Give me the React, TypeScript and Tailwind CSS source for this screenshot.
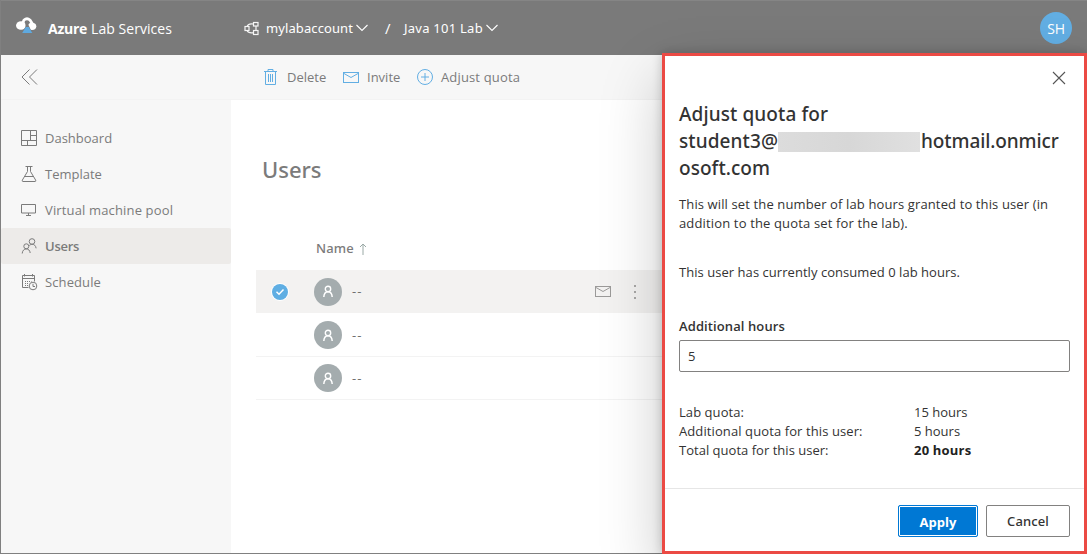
import type { ReactNode } from 'react';

function Icon({ w, h, className = '', children }: { w: number; h: number; className?: string; children: ReactNode }) {
  return (
    <svg width={w} height={h} viewBox={`0 0 ${w} ${h}`} fill="none" stroke="currentColor" className={`shrink-0 ${className}`}>
      {children}
    </svg>
  );
}

function Logo() {
  return (
    <Icon w={21} h={17} className="text-white">
      <path d="M6.500 6.500 8 3Q11 .6 14 3l2.500 4" strokeWidth="2.800" strokeLinejoin="round" />
      <ellipse cx="5" cy="8.500" rx="5" ry="4.300" fill="currentColor" stroke="none" />
      <ellipse cx="16" cy="9.300" rx="4.300" ry="3.600" fill="currentColor" stroke="none" />
      <path d="M9.500 4.500h3v3.500l4 8.500H6l3.500-7z" fill="#7a7a7a" stroke="none" />
      <path d="M9.700 10h3.100l3.500 6H6.200z" fill="#5fa9df" stroke="none" />
    </Icon>
  );
}

function Hierarchy() {
  return (
    <Icon w={16} h={15} className="text-[#f5f5f5]">
      <g strokeWidth="1.2">
        <rect x="1" y="5.5" width="4" height="4" />
        <rect x="9.5" y="1.5" width="4.5" height="3.5" />
        <rect x="9.5" y="9.5" width="4.5" height="4" />
        <path d="M3 5.5C4 3 6 2.3 9.5 3M3 9.5c1 2.2 3 2.8 6.500 2.200M12 5v4.500" />
      </g>
    </Icon>
  );
}

function Chevron() {
  return <Icon w={12} h={8} className="text-white"><path d="M.5 1 6 6.500 11.500 1" strokeWidth="1.100" /></Icon>;
}

function Envelope({ className }: { className: string }) {
  return (
    <Icon w={16} h={11} className={className}>
      <rect x=".5" y=".5" width="15" height="10" />
      <path d="M1 1.500 8 5.500l7-4" />
    </Icon>
  );
}

const nav = [
  {
    label: 'Dashboard', cls: '',
    icon: <Icon w={16} h={16}><path d="M.5.5h15v15H.5zM.5 10.500h15M9.500.5v10M9.500 5.500h6M6.500 10.500v5" /></Icon>,
  },
  {
    label: 'Template', cls: '',
    icon: <Icon w={16} h={16}><path d="M4.500.5h7M6.500.5v5L1.300 14.200q-.4 1.300.7 1.300h12q1.100 0 .7-1.300L9.500 5.500v-5M3.500 10.500h9" /></Icon>,
  },
  {
    label: 'Virtual machine pool', cls: 'tracking-[0.15px]',
    icon: <Icon w={16} h={12}><path d="M.5.5h14v8.500H.5zM7.500 9v2.500M5 11.500h5" /></Icon>,
  },
  {
    label: 'Users', cls: 'font-semibold tracking-[-0.25px]',
    icon: (
      <Icon w={16} h={16}>
        <circle cx="11" cy="3.500" r="2.800" /><circle cx="5.300" cy="8.300" r="2.500" />
        <path d="M1.200 15.500c.2-3 2-4.600 4.100-4.600s3.600 1.500 3.900 4.100M8.300 7.500c1-.9 2-1.200 2.900-1.200 2 0 3.600 1.400 3.900 4" />
      </Icon>
    ),
  },
  {
    label: 'Schedule', cls: 'tracking-[0.1px]',
    icon: (
      <Icon w={17} h={17}>
        <path d="M7.500 13.500h-6v-12h12v6M1.500 4.500h12M3.500 0v2.500M11.500 0v2.500" />
        <path d="M4 7.500h6.500M4 9.500h4M4 11.500h3" strokeDasharray="1 1" />
        <circle cx="12" cy="12" r="3.800" /><path d="M12 9.800v2.700h2" />
      </Icon>
    ),
  },
];

function Person() {
  return (
    <span className="flex size-7 items-center justify-center rounded-full bg-[#a4acae] text-white">
      <Icon w={12} h={13}><circle cx="6" cy="4" r="2.700" strokeWidth="1.400" /><path d="M1.800 12C2 8.500 3.700 6.700 6 6.700s4 1.800 4.200 5.300" strokeWidth="1.500" /></Icon>
    </span>
  );
}

function Row({ selected = false }: { selected?: boolean }) {
  return (
    <div className={`flex items-center ${selected ? 'mb-px h-[43px] bg-[#f3f2f1]' : 'h-[43px] border-b border-[#f3f3f3]'}`}>
      <div className="flex w-[58px] shrink-0 pl-4">
        {selected && (
          <span className="flex size-4 items-center justify-center rounded-full bg-[#5faee3] text-white ring-1 ring-white">
            <Icon w={10} h={8}><path d="M1.500 3.800 4 6.200 8.500 1.500" strokeWidth="1.500" /></Icon>
          </span>
        )}
      </div>
      <Person />
      <span className="ml-[10px] w-[243px] pt-px text-[#707070] tracking-[1px]">--</span>
      {selected && (
        <>
          <Envelope className="text-[#9b9a99]" />
          <Icon w={2} h={14} className="ml-[23px] text-[#a8a7a6]"><path d="M1 0v2M1 6v2M1 12v2" strokeWidth="2" /></Icon>
        </>
      )}
    </div>
  );
}

const quotas = [
  { label: 'Lab quota:', value: '15 hours', lc: 'tracking-[0.06px]', vc: '' },
  { label: 'Additional quota for this user:', value: '5 hours', lc: 'tracking-[0.1px]', vc: '' },
  { label: 'Total quota for this user:', value: '20 hours', lc: 'tracking-[0.02px]', vc: 'font-bold tracking-[0.2px] text-[#222]' },
];

function Panel() {
  return (
    <section className="absolute top-[53px] right-0 bottom-0 flex w-[425px] flex-col border-3 border-[#eb4a44] bg-white text-[#333] shadow-[0_0_10px_rgba(0,0,0,0.2),0_26px_58px_rgba(0,0,0,0.22)]">
      <div className="flex h-[43px] items-center justify-end pr-[18px]">
        <Icon w={14} h={14} className="text-[#555]"><path d="M1 1l12 12M13 1 1 13" strokeWidth="1.100" /></Icon>
      </div>
      <div className="flex grow flex-col px-[14px]">
        <h2 className="mt-[2px] font-['Noto_Sans',sans-serif] text-[19px] leading-[27px] font-medium">
          <div className="tracking-[0.1px]">Adjust quota for</div>
          <div className="flex items-center">
            <span className="w-[99px] tracking-[0.1px]">student3@</span>
            <span className="mt-px mr-px h-5 w-[142px] bg-linear-to-r from-[#dcdcdc] via-[#d7d7d7] to-[#e0e0e0]" />
            <span className="tracking-[-0.1px]">hotmail.onmicr</span>
          </div>
          <div className="tracking-[0.05px]">osoft.com</div>
        </h2>
        <p className="mt-[13px] leading-[19px] whitespace-nowrap">
          <span className="block tracking-[0.125px]">This will set the number of lab hours granted to this user (in</span>
          <span className="block tracking-[0.15px]">addition to the quota set for the lab).</span>
        </p>
        <p className="mt-[30px] leading-[19px] tracking-[0.045px]">This user has currently consumed 0 lab hours.</p>
        <label className="mt-[35px] leading-[19px] font-semibold tracking-[0.1px]">Additional hours</label>
        <div className="mt-[4px] flex h-8 w-[391px] items-center rounded-[2px] border border-[#828180] pt-[2px] pl-2">5</div>
        <div className="mt-[31px] leading-[19px]">
          {quotas.map((q) => (
            <div key={q.label} className="flex">
              <span className={`w-[235px] ${q.lc}`}>{q.label}</span>
              <span className={q.vc}>{q.value}</span>
            </div>
          ))}
        </div>
      </div>
      <footer className="flex h-[63px] items-start justify-end gap-2 border-t border-[#e6e6e6] pt-4 pr-[14px]">
        <button className="h-8 w-20 rounded-[2px] border border-[#0078d4] bg-[#0078d4] p-0 font-bold text-white inset-ring inset-ring-white">
          <span className="block pt-[3px]">Apply</span>
        </button>
        <button className="h-8 w-[84px] rounded-[2px] border border-[#828180] font-['Noto_Sans',sans-serif] font-medium tracking-[0.1px]">
          <span className="block pt-px">Cancel</span>
        </button>
      </footer>
    </section>
  );
}

export default function App() {
  return (
    <div className="relative h-[554px] w-[1087px] overflow-hidden">
      <div className="flex h-full flex-col border-b border-l border-[#808080] bg-white font-['Open_Sans',sans-serif] text-[13px] text-[#7b7b7b]">
        <header className="flex h-[55px] shrink-0 items-center border-t border-[#858585] bg-[#7a7a7a] text-white">
          <div className="mb-[5px] ml-[15px]"><Logo /></div>
          <div className="ml-[11px] flex w-[196px] gap-1 text-[14px]">
            <span className="font-bold tracking-[-0.25px]">Azure</span>
            <span className="tracking-[0.04px]">Lab Services</span>
          </div>
          <div className="flex w-[140px] items-center">
            <Hierarchy />
            <span className="ml-[6px] pt-[2px] font-['Noto_Sans',sans-serif] tracking-[0.1px]">mylabaccount</span>
            <span className="ml-[3px]"><Chevron /></span>
          </div>
          <span className="ml-px w-[19px] pt-px text-[15px]">/</span>
          <span className="pt-[2px] font-['Noto_Sans',sans-serif] tracking-[0.25px]">Java 101 Lab</span>
          <span className="ml-[3px]"><Chevron /></span>
          <span className="mr-[15px] ml-auto flex size-8 items-center justify-center rounded-full bg-[#62aee3] text-[14px] tracking-[-0.3px]">SH</span>
        </header>

        <div className="flex h-[45px] shrink-0 items-center border-b border-[#f3f3f3] bg-[#f7f7f7]">
          <Icon w={17} h={16} className="ml-5"><path d="M8.500.5 1 8l7.500 7.500M16 .5 8.500 8l7.500 7.500" /></Icon>
          <div className="ml-[226px] flex items-center">
            <Icon w={13} h={16} className="text-[#62aee3]"><path d="M0 2.500h13M4 2.500v-2h5v2M1.500 2.500v13h10v-13M4.500 5v8M6.500 5v8M8.500 5v8" /></Icon>
            <span className="ml-[10px] w-[56px] pt-[2px]">Delete</span>
            <Envelope className="text-[#62aee3]" />
            <span className="ml-2 w-[50px] pt-[2px]">Invite</span>
            <Icon w={16} h={16} className="text-[#62aee3]"><circle cx="8" cy="8" r="7.500" /><path d="M8 4v8M4 8h8" /></Icon>
            <span className="ml-2 pt-[2px] tracking-[0.15px]">Adjust quota</span>
          </div>
        </div>

        <div className="flex grow">
          <nav className="w-[230px] shrink-0 bg-[#f7f7f7] pt-5">
            {nav.map((n) => (
              <div key={n.label} className={`flex h-9 items-center pl-5 ${n.label === 'Users' ? 'rounded-[2px] bg-[#edebe9]' : ''}`}>
                <span className="flex w-6">{n.icon}</span>
                <span className={`pt-[2px] ${n.cls}`}>{n.label}</span>
              </div>
            ))}
          </nav>
          <main className="grow pl-[25px]">
            <h1 className="mt-[53px] ml-[6px] font-['Noto_Sans',sans-serif] text-[22px] leading-[32px] font-medium">Users</h1>
            <div className="mt-[42px] flex h-[43px] items-center pl-[60px] font-['Noto_Sans',sans-serif] font-medium">
              <span className="tracking-[0.1px]">Name</span>
              <Icon w={8} h={12} className="mt-px ml-[5px] text-[#9aa9a6]"><path d="M4 12V1M1 4l3-3 3 3" /></Icon>
            </div>
            <Row selected />
            <Row />
            <Row />
          </main>
        </div>

        <Panel />
      </div>
    </div>
  );
}
